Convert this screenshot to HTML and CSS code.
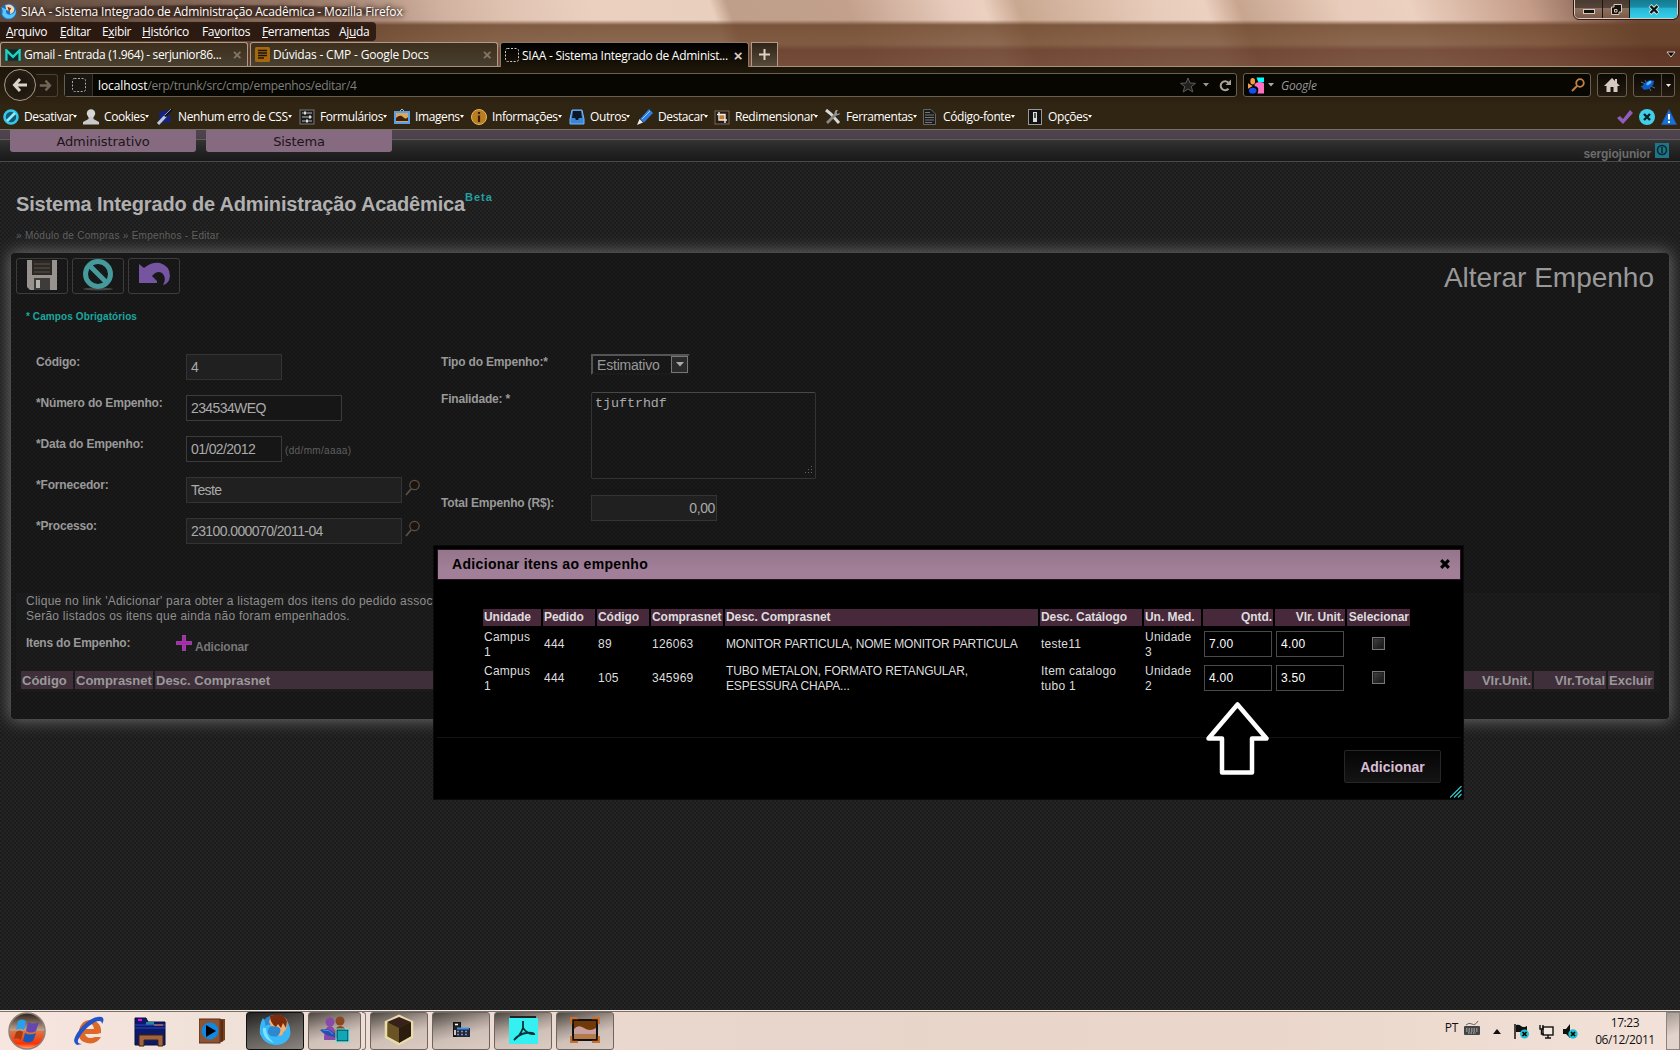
FILE: index.html
```html
<!DOCTYPE html>
<html lang="pt-BR">
<head>
<meta charset="utf-8">
<title>SIAA - Sistema Integrado de Administração Acadêmica</title>
<link rel="stylesheet" href="styles.css">
</head>
<body>
<header class="chrome">
  <div class="glass">
    <div class="titlebar">
      <svg class="tb-icon" width="17" height="17" viewBox="0 0 32 32"><circle cx="16" cy="16" r="15" fill="#1d6fc0"/><path d="M2 8Q7 14 4 21Q9 31 20 29Q31 25 30 12Q26 22 17 22Q9 20 12 12Z" fill="#54c8ff"/><path d="M10 4Q22 0 27 10Q28 18 19 21Q21 14 12 13Z" fill="#f4d8b4"/><path d="M14 7L21 10L17 17Z" fill="#8a3012"/></svg>
      <span class="win-title">SIAA - Sistema Integrado de Administração Acadêmica - Mozilla Firefox</span>
      <div class="win-controls">
        <span class="wc wc-min"><svg width="12" height="5"><rect x=".5" y=".5" width="11" height="4" fill="#111" stroke="#d8cbb8"/></svg></span>
        <span class="wc wc-max"><svg width="13" height="13" viewBox="0 0 13 13" fill="none"><path d="M4 1.5H11.5V9H9V11.5H1.500V4H4Z" fill="#15110c" stroke="#d8cbb8"/><path d="M4.500 6.500H7V9H4.500Z" stroke="#d8cbb8"/></svg></span>
        <span class="wc wc-close"><svg width="12" height="11" viewBox="0 0 12 11"><path d="M2 1.500L10 9.500M10 1.500L2 9.500" stroke="#cfe8e0" stroke-width="4"/><path d="M2.500 2L9.500 9M9.500 2L2.500 9" stroke="#111" stroke-width="2.400"/></svg></span>
      </div>
    </div>
    <nav class="menubar"><span><u>A</u>rquivo</span><span><u>E</u>ditar</span><span>E<u>x</u>ibir</span><span><u>H</u>istórico</span><span>Fa<u>v</u>oritos</span><span><u>F</u>erramentas</span><span>Aj<u>u</u>da</span></nav>
    <div class="tabs">
      <div class="tab"><svg width="16" height="12" viewBox="0 0 17 12"><path d="M0 0H17V12H0Z" fill="#0a2e2c"/><path d="M1.500 12V1L8.500 8L15.500 1V12" fill="none" stroke="#22d3c5" stroke-width="2.500"/></svg><span class="t1">Gmail - Entrada (1.964) - serjunior86...</span><b>×</b></div>
      <div class="tab"><svg width="15" height="15" viewBox="0 0 15 15"><rect width="15" height="15" rx="1.500" fill="#a5680e"/><path d="M3 3.500H12M3 6H12M3 8.500H12M3 11H9" stroke="#1e1402" stroke-width="1.300"/></svg><span class="t2">Dúvidas - CMP - Google Docs</span><b>×</b></div>
      <div class="tab active"><svg width="14" height="14"><rect x=".5" y=".5" width="13" height="13" rx="2" fill="none" stroke="#ccc" stroke-dasharray="2 1.500"/></svg><span class="t3">SIAA - Sistema Integrado de Administ...</span><b>×</b></div>
      <div class="newtab"><svg width="11" height="11"><path d="M5.500 0V11M0 5.500H11" stroke="#ded4c6" stroke-width="2"/></svg></div>
      <svg class="alltabs" width="10" height="7"><path d="M1 1H9L5 6Z" fill="#000" stroke="#d8c8b8"/></svg>
    </div>
  </div>
  <div class="navbar">
    <div class="backfwd">
      <span class="back"><svg width="16" height="16" viewBox="0 0 16 16"><path d="M15 8H3M8 2L2.500 8L8 14" fill="none" stroke="#dcd3c8" stroke-width="3"/></svg></span>
      <span class="fwd"><svg width="13" height="13" viewBox="0 0 16 16"><path d="M1 8H13M8 2L13.500 8L8 14" fill="none" stroke="#716656" stroke-width="3"/></svg></span>
    </div>
    <div class="urlbar">
      <span class="site"><svg width="14" height="14"><rect x=".5" y=".5" width="13" height="13" rx="2" fill="none" stroke="#aaa" stroke-dasharray="2 1.500"/></svg></span>
      <span class="url"><i>localhost</i>/erp/trunk/src/cmp/empenhos/editar/4</span>
      <svg class="star" width="16" height="16" viewBox="0 0 16 16"><path d="M8 1L10 6L15.500 6.300L11.300 9.600L12.800 15L8 12L3.200 15L4.700 9.600L.5 6.300L6 6Z" fill="#20201f" stroke="#5c5c5a"/></svg>
      <svg class="dn" width="6" height="4"><path d="M0 0H6L3 3.500Z" fill="#999"/></svg>
      <svg class="reload" width="13" height="13" viewBox="0 0 13 13"><path d="M9.500 9.800A4.500 4.500 0 1 1 9.300 3.500" fill="none" stroke="#aaa39a" stroke-width="2"/><path d="M12 .5V6H6.500Z" fill="#aaa39a"/></svg>
    </div>
    <div class="search">
      <svg width="16" height="17" viewBox="0 0 17 17"><rect width="17" height="17" fill="#080808"/><path d="M9 0H17V5H11Z" fill="#0ff"/><path d="M7 7Q11 3 17 6V17H10Q13 10 7 9Z" fill="#ff70c0"/><ellipse cx="5" cy="4" rx="2.500" ry="3.500" fill="#f4a040"/><path d="M0 6L5 9L0 12Z" fill="#f4a040"/><ellipse cx="5" cy="14" rx="4" ry="3" fill="#1450f0"/></svg>
      <svg class="dn" width="6" height="4"><path d="M0 0H6L3 3.500Z" fill="#aaa"/></svg>
      <em>Google</em>
      <svg class="mag" width="14" height="14" viewBox="0 0 14 14"><circle cx="9" cy="5" r="3.800" fill="none" stroke="#c08048" stroke-width="1.800"/><path d="M6 8L1 13" stroke="#c08048" stroke-width="2"/></svg>
    </div>
    <div class="tbtn home"><svg width="16" height="14" viewBox="0 0 16 14"><path d="M8 0L11 3V1H13V5L16 8H13.500V14H9.500V9H6.500V14H2.500V8H0Z" fill="#d6cbc2"/></svg></div>
    <div class="tbtn bug"><span><svg width="16" height="14" viewBox="0 0 16 14"><path d="M1 4L15 10M5 2L11 13M1 9L14 3" stroke="#4a6c90"/><ellipse cx="8" cy="7" rx="6.500" ry="3.600" transform="rotate(-35 8 7)" fill="#0c5cc8"/><ellipse cx="9" cy="5" rx="3" ry="1.500" transform="rotate(-35 9 5)" fill="#5cb8ff"/></svg></span><span><svg width="5" height="3"><path d="M0 0H5L2.500 3Z" fill="#eee"/></svg></span></div>
  </div>
  <div class="devbar">
    <span><svg viewBox="0 0 16 16"><circle cx="8" cy="8" r="6.500" fill="#0f5a78" stroke="#36c8e8" stroke-width="2.600"/><path d="M4 12L12 4" stroke="#8cecff" stroke-width="2.600"/></svg>Desativar<s></s></span>
    <span><svg viewBox="0 0 16 16"><circle cx="8" cy="4.500" r="4.200" fill="#d5d5d5"/><path d="M5.500 8H10.500V10L16 13V15.500H0V13L5.500 10Z" fill="#c9c9c9"/></svg>Cookies<s></s></span>
    <span><svg viewBox="0 0 16 16"><path d="M2 3L12 1L14 13L3 14Z" fill="#10239a" opacity=".8"/><path d="M1 15L9 6.500" stroke="#b8c8e8" stroke-width="3"/><path d="M8 7.500L15 0" stroke="#121216" stroke-width="2.500"/><path d="M8 6L14 0" stroke="#bbb" stroke-width=".8"/></svg>Nenhum erro de CSS<s></s></span>
    <span><svg viewBox="0 0 16 16"><rect x="1" y="1" width="14" height="14" fill="#1c1c1c" stroke="#777"/><path d="M3 4H13M3 8H13M3 12H13" stroke="#bbb"/><path d="M6 2.500V5.500M11 6.500V9.500M8 10.500V13.500" stroke="#ddd" stroke-width="2"/></svg>Formulários<s></s></span>
    <span><svg viewBox="0 0 16 16"><path d="M6 2L8 0L10 2" fill="none" stroke="#bbb"/><rect x="1" y="3" width="14" height="11" fill="#d9a660" stroke="#55a0e8" stroke-width="2"/><path d="M2 9Q6 5 9 8T14 8V12H2Z" fill="#40220c"/></svg>Imagens<s></s></span>
    <span><svg viewBox="0 0 16 16"><circle cx="8" cy="8" r="7.500" fill="#b87d20" stroke="#e8b860"/><path d="M8 3V5M8 6.500V13" stroke="#382005" stroke-width="2.200"/></svg>Informações<s></s></span>
    <span><svg viewBox="0 0 16 16"><path d="M3 1H13L15 10V15H1V10Z" fill="#3b86d8" stroke="#75b8f8"/><path d="M4 2H12L13 9H10L9 11H7L6 9H3Z" fill="#0c1622"/></svg>Outros<s></s></span>
    <span><svg viewBox="0 0 16 16"><path d="M0 16L2.500 10L6 13.500Z" fill="#eee"/><path d="M3 10L12 0L16 4L7 13.500Z" fill="#2d7ee0"/><path d="M5 10L13 2" stroke="#98ccff"/></svg>Destacar<s></s></span>
    <span><svg viewBox="0 0 16 16"><rect x="1" y="2" width="14" height="13" fill="#2a1b10" stroke="#776858"/><rect x="6" y="6" width="5" height="5" fill="#c87a2c"/><path d="M5 3V11H13M3 5.500H11V14" fill="none" stroke="#eee" stroke-width="1.400"/></svg>Redimensionar<s></s></span>
    <span><svg viewBox="0 0 16 16"><path d="M1 1L6 5L14 14" stroke="#d8d8d8" stroke-width="3" fill="none"/><path d="M2 14L11 5" stroke="#888" stroke-width="2.800"/><path d="M11 1Q8 4 11 6Q14 7 15.500 4L12.500 5L11.500 3.500L13 1Z" fill="#999"/></svg>Ferramentas<s></s></span>
    <span><svg viewBox="0 0 16 16"><path d="M1.500.5H9L13.500 5V15.500H1.500Z" fill="#1b1b1b" stroke="#666"/><path d="M3 6H12M3 8.500H12M3 11H12M3 13.500H10M3 3.500H8" stroke="#777"/></svg>Código-fonte<s></s></span>
    <span><svg viewBox="0 0 16 16"><rect x="1.500" y=".5" width="13" height="15" fill="#111" stroke="#999"/><path d="M6 13V3H10V13Z" fill="#ddd"/><path d="M8 4V9" stroke="#222" stroke-width="1.500"/></svg>Opções<s></s></span>
    <div class="devstatus">
      <svg viewBox="0 0 16 16"><path d="M0 9L3 7L6 10L13 1L16 4L6 15Z" fill="#8f5cc0"/></svg>
      <svg viewBox="0 0 16 16"><circle cx="8" cy="8" r="8" fill="#42d0e8"/><path d="M5 5L11 11M11 5L5 11" stroke="#082028" stroke-width="2.400"/></svg>
      <svg viewBox="0 0 16 16"><path d="M8 .5L15.500 15.500H.5Z" fill="#1472d8" stroke="#2a50a0"/><path d="M8 5V10.500M8 12V14" stroke="#fff" stroke-width="2"/></svg>
    </div>
  </div>
</header>

<main class="page">
  <div class="topmenu"><a>Administrativo</a><a>Sistema</a>
    <div class="user">sergiojunior<svg width="14" height="15" viewBox="0 0 14 15"><rect width="14" height="15" fill="#1f7488"/><circle cx="7" cy="7" r="4.500" fill="none" stroke="#07242c" stroke-width="1.500"/><path d="M7 4V10" stroke="#07242c" stroke-width="1.500"/></svg></div>
  </div>
  <h1>Sistema Integrado de Administração Acadêmica<sup>Beta</sup></h1>
  <p class="crumbs">» Módulo de Compras » Empenhos - Editar</p>
  <section class="panel">
    <div class="panelhead">
      <div class="actions">
        <a><svg width="30" height="30" viewBox="0 0 30 30"><path d="M0 0H30V30H3L0 27Z" fill="#97928d"/><rect x="5" y="0" width="20" height="15" fill="#2c2823"/><path d="M7 4H23M7 8H23M7 12H23" stroke="#5a544c"/><rect x="7" y="18" width="16" height="12" fill="#3d3c3a"/><rect x="9" y="20" width="4" height="8" fill="#b5b2ae"/></svg></a>
        <a><svg width="32" height="32" viewBox="0 0 32 32"><ellipse cx="16" cy="30" rx="15" ry="1.500" fill="#444"/><circle cx="16" cy="15" r="12.500" fill="none" stroke="#459a9c" stroke-width="5"/><path d="M7 6L25 24" stroke="#459a9c" stroke-width="5"/></svg></a>
        <a><svg width="32" height="32" viewBox="0 0 32 32"><path d="M1 5L6 9Q13 3 22 4Q32 7 32 17Q31 25 25 26Q29 19 24 14Q19 11 14 17L19 22V24H1Z" fill="#7555a0"/></svg></a>
      </div>
      <h2>Alterar Empenho</h2>
    </div>
    <p class="required">* Campos Obrigatórios</p>
    <div class="form">
      <div class="col left">
        <div class="row"><label>Código:</label><span class="in ro w96">4</span></div>
        <div class="row"><label>*Número do Empenho:</label><span class="in w156">234534WEQ</span></div>
        <div class="row"><label>*Data do Empenho:</label><span class="in w96">01/02/2012</span><small>(dd/mm/aaaa)</small></div>
        <div class="row"><label>*Fornecedor:</label><span class="in ro w216">Teste</span><svg class="lupa" width="15" height="17" viewBox="0 0 15 17"><circle cx="9.500" cy="6" r="4.700" fill="#1d130b" stroke="#57514c" stroke-width="1.200"/><path d="M6 10L1 16" stroke="#57514c" stroke-width="1.800"/></svg></div>
        <div class="row"><label>*Processo:</label><span class="in ro w216">23100.000070/2011-04</span><svg class="lupa" width="15" height="17" viewBox="0 0 15 17"><circle cx="9.500" cy="6" r="4.700" fill="#1d130b" stroke="#57514c" stroke-width="1.200"/><path d="M6 10L1 16" stroke="#57514c" stroke-width="1.800"/></svg></div>
      </div>
      <div class="col right">
        <div class="row r-tipo"><label>Tipo do Empenho:*</label><span class="sel">Estimativo<i><svg width="8" height="5"><path d="M0 0H8L4 4.500Z" fill="#aaa"/></svg></i></span></div>
        <div class="row r-fin"><label>Finalidade: *</label><span class="area">tjuftrhdf<svg width="9" height="9"><path d="M8.500 0V9M5.500 3V9M2.500 6V9" stroke="#666" stroke-dasharray="1 2" /></svg></span></div>
        <div class="row"><label>Total Empenho (R$):</label><span class="in ro w126">0,00</span></div>
      </div>
    </div>
    <div class="items">
      <p>Clique no link 'Adicionar' para obter a listagem dos itens do pedido associado<br>Serão listados os itens que ainda não foram empenhados.</p>
      <div class="additem"><strong>Itens do Empenho:</strong><svg width="16" height="16" viewBox="0 0 16 16"><path d="M6 0H10V6H16V10H10V16H6V10H0V6H6Z" fill="#8c4a94"/><path d="M8 1V15M1 8H15" stroke="#b520b8" stroke-width="2"/></svg><a>Adicionar</a></div>
      <div class="ihead"><b>Código</b><b>Comprasnet</b><b>Desc. Comprasnet</b><b class="r">Vlr.Unit.</b><b class="r">Vlr.Total</b><b>Excluir</b></div>
    </div>
  </section>
</main>

<div class="dialog">
  <div class="dtitle"><span>Adicionar itens ao empenho</span><svg width="10" height="10" viewBox="0 0 10 10"><path d="M1.200 1.200L8.800 8.800M8.800 1.200L1.200 8.800" stroke="#000" stroke-width="3.200"/></svg></div>
  <div class="dbody">
    <table>
      <colgroup><col class="c58"><col class="c52"><col class="c52"><col class="c72"><col class="c313"><col class="c102"><col class="c57"><col class="c70"><col class="c70"><col class="c63"></colgroup>
      <tr><th>Unidade</th><th>Pedido</th><th>Código</th><th>Comprasnet</th><th>Desc. Comprasnet</th><th>Desc. Catálogo</th><th>Un. Med.</th><th class="r">Qntd.</th><th class="r">Vlr. Unit.</th><th class="r">Selecionar</th></tr>
      <tr><td>Campus<br>1</td><td>444</td><td>89</td><td>126063</td><td class="d">MONITOR PARTICULA, NOME MONITOR PARTICULA</td><td>teste11</td><td>Unidade<br>3</td><td><span class="q">7.00</span></td><td><span class="q">4.00</span></td><td><span class="cb"></span></td></tr>
      <tr><td>Campus<br>1</td><td>444</td><td>105</td><td>345969</td><td class="d">TUBO METALON, FORMATO RETANGULAR,<br>ESPESSURA CHAPA...</td><td>Item catalogo<br>tubo 1</td><td>Unidade<br>2</td><td><span class="q">4.00</span></td><td><span class="q">3.50</span></td><td><span class="cb"></span></td></tr>
    </table>
  </div>
  <div class="dfoot"><a>Adicionar</a></div>
  <svg class="grip" width="12" height="12"><path d="M0 11.500L11.500 0M4 11.500L11.500 4M8 11.500L11.500 8" stroke="#2fd8d8" stroke-width="1.100"/></svg>
  <svg class="arrow" width="66" height="76" viewBox="1204 700 66 76"><path d="M1237.500 704.500L1266.500 738.500H1252V772.500H1222V738.500H1208.500Z" fill="#000" stroke="#fff" stroke-width="4.500" stroke-linejoin="round"/></svg>
</div>

<footer class="taskbar">
  <svg class="orb" width="38" height="38" viewBox="0 0 38 38"><defs><linearGradient id="o" x2="0" y2="1"><stop offset="0" stop-color="#2b2018"/><stop offset=".48" stop-color="#c0a48e"/><stop offset=".5" stop-color="#d87848"/><stop offset=".85" stop-color="#ff3000"/><stop offset="1" stop-color="#ffb080"/></linearGradient></defs><circle cx="19" cy="19" r="18" fill="url(#o)" stroke="#8f8078" stroke-width="1.500"/><path d="M10 9Q14 6 18 9L16 18Q12 15 8 18Z" fill="#28a0f0"/><path d="M20 10Q25 13 31 10L28 19Q23 22 18 19Z" fill="#6448b0"/><path d="M8 20Q12 17 15 20L13 28Q9 25 6 27Z" fill="#a83c10"/><path d="M17 21Q22 24 28 21L25 29Q20 32 15 29Z" fill="#1858b8"/></svg>
  <svg class="ie" width="32" height="32" viewBox="0 0 32 32"><path d="M24 19H12Q14 25 22 22L28 22Q23 30 14 28Q4 26 6 15Q9 4 18 5Q29 7 28 18ZM12 14H21Q20 8 16 9Q13 10 12 14Z" fill="#dd6828"/><path d="M4 30Q-3 27 7 14Q19 0 29 2Q32 4 29 9Q29 4 22 7Q10 14 5 25Q4 29 9 29Z" fill="#2452c8"/></svg>
  <svg class="ex" width="33" height="32" viewBox="0 0 33 32"><path d="M1 1H12L14 5H31V28H1Z" fill="#0c1868" stroke="#071038"/><path d="M4 2H8V4H4Z" fill="#f0f"/><path d="M12 5H20V8H12Z" fill="#2088a0"/><path d="M20 7H29V9H20Z" fill="#f07020"/><path d="M1 8H31M1 11H31" stroke="#2848c0"/><path d="M5 29V18H29V29H24V23H10V29Z" fill="#a06440" stroke="#402010"/></svg>
  <svg class="mp" width="27" height="26" viewBox="0 0 27 26"><path d="M5 1H26V22L20 25H5Z" fill="#7a4020"/><rect x="0" y="1" width="21" height="24" fill="#8c5432" stroke="#5a2c14"/><path d="M23 2V24" stroke="#3a1808"/><circle cx="11" cy="13" r="8.500" fill="#1288e0"/><path d="M7 7L17 13L7 19Z" fill="#000"/></svg>
  <div class="task on ff"><svg width="32" height="32" viewBox="0 0 32 32"><circle cx="16" cy="16" r="15" fill="#2c88d0"/><path d="M4 4Q7 8 6 12Q10 9 13 12Q8 14 9 19Q12 24 19 22Q27 20 29 9Q36 24 23 30Q7 34 1 20Q0 11 4 4Z" fill="#38b8f8"/><path d="M12 2Q22 -1 28 6Q30 14 24 19Q24 22 19 22Q24 15 19 13L12 12L10 8Z" fill="#eeb078"/><path d="M11 2Q24 -2 28 7L27 14L24 9L22 14L19 10L17 13Q11 9 11 2Z" fill="#7c2c0c"/><path d="M4 14Q3 25 15 29Q7 22 7 14Z" fill="#7ce0ff"/></svg></div>
  <div class="task msn"><svg width="32" height="28" viewBox="0 0 32 28"><circle cx="11" cy="6" r="4.500" fill="#8a48a8"/><path d="M5 24Q5 10 11 10Q17 10 17 24Z" fill="#8a48a8"/><circle cx="21" cy="5" r="4.500" fill="#884820"/><path d="M15 22Q15 10 21 10Q28 10 27 22Z" fill="#884820"/><path d="M1 14Q9 11 15 17T31 12Q27 21 16 21Q6 20 1 14Z" fill="#2450b0"/><path d="M4 14Q10 13 14 18" fill="none" stroke="#5c90e8"/><rect x="18" y="14" width="11" height="11" fill="#10a8b8" stroke="#053038"/><rect x="17" y="13" width="13" height="13" fill="none" stroke="#60e8e8"/></svg></div>
  <div class="stack"></div>
  <div class="task"><svg width="32" height="32" viewBox="0 0 32 32"><path d="M16 2L29 8V23L16 30L3 23V8Z" fill="#6b5424" stroke="#e8dca8" stroke-width="2.500"/><path d="M16 3L28 8L16 14L4 8Z" fill="#38201c"/><path d="M16 14L28 8V22L16 29Z" fill="#2a1c0e"/></svg></div>
  <div class="task"><svg width="17" height="16" viewBox="0 0 17 16"><rect x=".5" y=".5" width="7" height="14" fill="#222" stroke="#111"/><path d="M2 2.500H5M2 8V13" stroke="#fff" stroke-width="1.500"/><rect x="4" y="6" width="13" height="9" fill="#20283c"/><path d="M4 6.500H16" stroke="#4090e8" stroke-width="2"/><path d="M4 9.500H16M4 12.500H16" stroke="#8890a8" stroke-dasharray="2 2" stroke-width="1.500"/></svg></div>
  <div class="task"><svg width="29" height="29" viewBox="0 0 29 29"><rect width="26" height="4" x="1" fill="#222"/><rect y="2" width="29" height="26" fill="#35f0f0"/><path d="M14 5V12Q11 20 5 24Q10 18 17 17T25 18Q19 19 14 12" fill="none" stroke="#053038" stroke-width="1.800"/></svg></div>
  <div class="task"><svg width="30" height="26" viewBox="0 0 30 26"><rect x="3" y="3" width="24" height="20" fill="#c9a0a0" stroke="#111" stroke-width="2"/><path d="M4 4H26V11Q20 15 14 11T4 12Z" fill="#723808"/><path d="M4 17H26V22H4Z" fill="#b47a48"/><path d="M1 7V1H8M22 1H29V7M29 19V25H22M8 25H1V19" fill="none" stroke="#c87030" stroke-width="2.500"/></svg></div>
  <div class="tray">
    <span class="lang">PT</span>
    <svg class="kb" width="16" height="14" viewBox="0 0 16 14"><path d="M2 4Q5 1 8 3T14 0" fill="none" stroke="#666"/><rect y="5" width="16" height="9" rx="1" fill="#444"/><path d="M2 8H14M2 10H14M4 12H12" stroke="#ccc" stroke-dasharray="1.500 1"/></svg>
    <svg class="up" width="8" height="5"><path d="M0 5L4 0L8 5Z" fill="#111"/></svg>
    <svg class="fl" width="15" height="15" viewBox="0 0 15 15"><path d="M1 0V15" stroke="#111" stroke-width="1.500"/><path d="M2 1Q5 0 7 2T13 2V8H2Z" fill="#111"/><circle cx="10.500" cy="10" r="4.500" fill="#20c0d0"/><path d="M8.500 8L12.500 12M12.500 8L8.500 12" stroke="#000" stroke-width="1.600"/></svg>
    <svg class="nt" width="15" height="15" viewBox="0 0 15 15"><rect x="4" y="3" width="10" height="8" fill="#f4e8e0" stroke="#111" stroke-width="1.400"/><path d="M6 14H12M9 11V14M1 1V5H4V1M2.500 5V10H5" fill="none" stroke="#111" stroke-width="1.400"/></svg>
    <svg class="sd" width="15" height="15" viewBox="0 0 15 15"><path d="M0 5H3L7 0V14L3 10H0Z" fill="#111"/><circle cx="10" cy="10" r="4.700" fill="#20c0d0"/><path d="M8 8L12 12M12 8L8 12" stroke="#000" stroke-width="1.600"/></svg>
    <div class="clock"><span>17:23</span><span>06/12/2011</span></div>
    <div class="showdesk"></div>
  </div>
</footer>
</body>
</html>
```
FILE: styles.css
```css
*{box-sizing:border-box}
body{margin:0;width:1680px;height:1050px;overflow:hidden;position:relative;display:flex;flex-direction:column;background:#222;font:12px/15px "Liberation Sans",Arial,sans-serif;color:#999}
svg{flex:none;display:block}
h1,h2,p{margin:0}
.chrome,.taskbar{font-family:"Open Sans","Noto Sans",sans-serif;font-size:12px;flex:none}
.chrome{color:#fff;height:130px;display:flex;flex-direction:column;letter-spacing:-.45px}

/* glass window frame */
.glass{height:67px;border-bottom:1px solid #a8927e;background:
 linear-gradient(90deg,rgba(30,18,10,.35),rgba(30,18,10,0) 30%),
 linear-gradient(180deg,transparent 20px,rgba(104,65,38,.8) 25px,rgba(104,65,38,.72) 44px,rgba(92,48,30,.8) 50px,rgba(98,56,38,.8)),
 linear-gradient(70deg,#806758 0,#b08d7a 20%,#d8b8a6 27%,#ebd0c0 36%,#e9cfbd 43%,#bf9f8a 44%,#c2a08c 51%,#e7cabb 57%,#ecd0c0 59%,#c9a890 61%,#e8ccbb 69%,#ecd0c0 72%,#c7a58f 74%,#e9ccbb 80%,#ecd0c0 84%,#c49c88 91%,#6d4a3c 97%)}
.titlebar{height:22px;display:flex;align-items:center}
.tb-icon{margin-left:0}
.win-title{margin-left:4px;padding-right:8px;letter-spacing:-.16px;background:radial-gradient(closest-side,rgba(40,22,14,.6) 70%,transparent);text-shadow:0 0 4px #2a1810,0 0 6px #3a241a;white-space:nowrap}
.win-controls{margin-left:auto;margin-right:2px;align-self:flex-start;display:flex;height:19px;border:1px solid #e0cabc;border-top:0;border-radius:0 0 5px 5px;outline:1px solid #2a1b14;overflow:hidden}
.wc{display:flex;align-items:center;justify-content:center;border-right:1px solid #20150e;background:linear-gradient(#4a3a30 0,#54443a 45%,#8d7261 46%,#7a5a48)}
.wc-min,.wc-max{width:28px}
.wc-max{width:27px}
.wc-min{padding-top:4px}
.wc-close{width:47px;border:0;background:linear-gradient(#147a90,#1a8ca6 40%,#28b4d4 45%,#36d0e8)}
.menubar{display:grid;grid-template-columns:54px 42px 40px 60px 60px 77px 37px;padding-left:6px;width:376px;height:19px;line-height:20px;background:rgba(28,16,10,.78);border-radius:0 4px 4px 0;letter-spacing:-.35px}
.tabs{display:flex;height:26px;margin-top:1px;gap:2px;align-items:stretch}
.tab{width:248px;display:flex;align-items:center;padding:0 6px 0 4px;border:1px solid #b09a88;border-bottom:0;border-radius:3px 3px 0 0;background:linear-gradient(#3d2e1d,#49402f);height:24px}
.tab.active{background:linear-gradient(#000,#1b1408);height:25px;width:249px;border-color:#8a7866}
.tab span{margin-left:3px;white-space:nowrap}
.t1{letter-spacing:-.34px}
.t2{letter-spacing:-.18px}
.t3{letter-spacing:-.26px}
.tab b{margin-left:auto;font:bold 15px/15px "Liberation Sans",sans-serif;color:#857869}
.tab.active b{color:#d8d0c8}
.newtab{width:27px;height:24px;display:flex;align-items:center;justify-content:center;border:1px solid #b09a88;border-bottom:0;background:linear-gradient(#2f2417,#564a3a)}
.alltabs{margin:9px 4px 0 auto}

.navbar{height:39px;display:flex;align-items:flex-start;padding-top:6px;background:linear-gradient(#1b1409,#302413)}
.backfwd{display:flex;align-items:center;margin:-5px 0 0 4px;height:34px}
.back{width:32px;height:32px;border-radius:50%;border:1px solid #a59a8b;background:radial-gradient(#181410,#2c2012);display:flex;align-items:center;justify-content:center}
.fwd{width:22px;height:23px;padding-right:3px;border:1px solid #4c412f;border-left:0;border-radius:0 3px 3px 0;display:flex;align-items:center;justify-content:center;background:#241b10}
.urlbar,.search,.tbtn{height:24px;border:1px solid #68604f;border-radius:3px;background:#070601;display:flex;align-items:center}
.urlbar{margin-left:6px;width:1173px}
.site{width:28px;height:22px;background:#191510;border-right:1px solid #38342c;display:flex;align-items:center;justify-content:center}
.url{margin-left:5px;color:#7e7e7c;letter-spacing:-.3px}
.url i{font-style:normal;color:#fff;letter-spacing:-.1px}
.star{margin-left:auto}
.urlbar .dn{margin:0 10px 0 7px}
.reload{margin-right:4px}
.search{margin-left:6px;width:348px;padding:0 5px 0 4px}
.search .dn{margin:0 7px 0 4px}
.search em{color:#979797;letter-spacing:-.2px}
.mag{margin-left:auto}
.tbtn{background:linear-gradient(#0c0904,#231a10);justify-content:center;margin-left:6px;width:30px}
.bug{width:42px}
.bug span{width:12px;height:22px;display:flex;align-items:center;justify-content:center}
.bug span:first-child{width:29px;border-right:1px solid #57503f}

.devbar{height:24px;padding-bottom:2px;background:#302413;border-bottom:1px solid #756f68;display:grid;grid-template-columns:80px 74px 142px 95px 77px 98px 68px 77px 111px 97px 105px 68px 1fr;padding-left:3px;align-items:center;letter-spacing:-.4px}
.devbar>span{display:flex;align-items:center;white-space:nowrap}
.devbar svg{width:16px;height:16px}
.devbar>span svg{margin-right:5px}
.devbar s{border:2.500px solid transparent;border-top:3px solid #fff;border-bottom:0;margin-left:0}
.devstatus{display:flex;gap:6px;justify-content:flex-end;padding-right:3px}

/* page */
.page{flex:1;min-height:0;background:
 repeating-conic-gradient(rgba(0,0,0,.22) 0 25%,transparent 0 50%) 0 0/4px 4px,#242424}
.topmenu{height:32px;display:flex;gap:10px;padding-left:10px;border-bottom:1px solid #484848;background:linear-gradient(#50444f 0,#4b3f4a 9px,#5e5c5e 9px,#5e5c5e 10px,#343434 10px,#292929 17px,#191919 31px)}
.topmenu a{width:186px;height:22px;border-radius:0 0 3px 3px;background:#866a80;color:#1c1519;font:13px/23px "DejaVu Sans",sans-serif;text-align:center;letter-spacing:-.1px}
.user{margin-left:auto;margin-right:11px;display:flex;gap:4px;font-size:12px;font-weight:bold;line-height:16px;padding-top:16px;color:#6c6c6c;letter-spacing:-.15px}
.user svg{margin-top:-3px}
h1{font-size:20px;line-height:24px;margin:29px 0 0 16px;color:#b0b0b0;height:24px;white-space:nowrap;letter-spacing:-.17px}
h1 sup{font-size:11px;line-height:12px;color:#25a0a5;letter-spacing:1px;vertical-align:10px}
.crumbs{margin:14px 0 0 16px;font-size:10px;line-height:14px;height:28px;color:#606060;letter-spacing:.28px}
.panel{margin:-4px 11px 0;height:466px;border-radius:4px;box-shadow:0 0 16px 2px #686868;padding-top:5px;background:
 repeating-conic-gradient(rgba(0,0,0,.2) 0 25%,transparent 0 50%) 0 0/4px 4px,#1a1a1a}
.panelhead{display:flex;justify-content:space-between;padding:0 15px 0 5px;height:36px}
.actions{display:flex;gap:4px}
.actions a{width:52px;height:36px;border:1px solid #3d3d3d;border-radius:3px;display:flex;align-items:center;justify-content:center;padding-bottom:2px}
h2{font-size:28px;line-height:39px;font-weight:normal;color:#999}
.required{margin:16px 0 0 15px;font-size:10px;line-height:14px;font-weight:bold;color:#1ba79f;letter-spacing:.1px}
.form{display:flex;margin-top:30px;height:239px}
.left{width:405px;padding-left:25px}
.right{padding-left:25px}
.row{display:flex;height:41px}
.row label,.in{flex:none}
.row label{width:150px;font-weight:bold;line-height:16px;white-space:nowrap;letter-spacing:-.18px}
.in{height:26px;border:1px solid #3b3b3b;padding-left:4px;font-size:14px;line-height:25px;color:#aaa;letter-spacing:-.6px;background:#161616}
.ro{background:#202020;border-color:#333}
.w96{width:96px}.w156{width:156px}.w216{width:216px}
.w126{width:126px;text-align:right;padding-right:1px;letter-spacing:-.4px}
.row small{font-size:10px;margin:7px 0 0 3px;color:#5f5f5f;letter-spacing:.35px}
.lupa{margin:2px 0 0 3px}
.r-tipo{height:37px}
.r-fin{height:104px}
.sel{width:99px;height:21px;border:2px solid #555;border-right-color:#1b1b1b;border-bottom-color:#1b1b1b;display:flex;padding-left:4px;font-size:14px;line-height:19px;color:#999;justify-content:space-between;letter-spacing:-.2px}
.sel i{width:17px;height:17px;border:1px solid #777;display:flex;align-items:center;justify-content:center;background:#2a2a2a}
.area{width:225px;height:87px;margin-top:1px;border:1px solid #333;border-top-color:#484848;border-radius:2px;padding:3px;font:13.300px/16px "Liberation Mono",monospace;color:#aaa;display:flex;justify-content:space-between;white-space:nowrap}
.area svg{align-self:flex-end}
.items{margin:0 9px 0 5px;height:99px;background:rgba(255,255,255,.015);padding:1px 6px 0 5px}
.items p{padding-left:5px;line-height:15px;white-space:nowrap;color:#8e8e8e;letter-spacing:.25px}
.additem{display:flex;margin:11px 0 0 5px;height:36px}
.additem strong{width:150px;line-height:16px;letter-spacing:-.22px}
.additem a{margin:5px 0 0 3px;font-weight:bold;color:#777;line-height:15px;letter-spacing:-.2px}
.ihead{display:grid;grid-template-columns:52px 78px 1fr 200px 72px 46px;gap:2px}
.ihead b{background:#3f2f3a;height:18px;line-height:19px;font-size:13px;padding:0 1px;white-space:nowrap}
.ihead .r{text-align:right}

/* modal */
.dialog{position:absolute;left:433px;top:545px;width:1031px;height:255px;border:1px solid #0b0b0b;background:#000;padding:3px 2px 3px 3px}
.dtitle{height:31px;background:linear-gradient(#94758a,#a17f98 70%);border:1px solid #2b1020;display:flex;align-items:center;justify-content:space-between;padding:0 10px 1px 14px;color:#000;font-weight:bold;font-size:14px;line-height:20px;letter-spacing:.33px}
.dbody{height:158px;padding:27px 0 0 44px;border-bottom:1px solid #121212}
table{table-layout:fixed;border-collapse:separate;border-spacing:2px;width:931px;color:#ddd}
.c58{width:58px}.c52{width:52px}.c72{width:72px}.c313{width:313px}.c102{width:102px}.c57{width:57px}.c70{width:70px}.c63{width:63px}
th{background:#47293b;height:17px;padding:0 1px;line-height:17px;text-align:left;white-space:nowrap;color:#ddd;letter-spacing:-.05px}
td{height:32px;padding:1px 1px 0;line-height:15px;white-space:nowrap;letter-spacing:.25px}
td.d{letter-spacing:-.16px}
th.r{text-align:right}
.q{display:block;width:68px;height:26px;margin-top:-1px;border:1px solid #4a4a4a;padding-left:4px;line-height:25px;color:#fff}
.cb{display:block;width:13px;height:13px;margin:-2px auto 0;border:1px solid #777;background:linear-gradient(135deg,#444,#111);box-shadow:inset 0 0 0 1px #222}
.dfoot{display:flex;justify-content:flex-end;padding:12px 20px 0 0}
.dfoot a{width:97px;height:33px;border:1px solid #262626;border-radius:2px;background:linear-gradient(#050505,#141414);text-align:center;font-weight:bold;font-size:14px;line-height:33px;color:#d9bdd4}
.grip{position:absolute;right:1px;bottom:1px}
.arrow{position:absolute;left:770px;top:154px}

/* taskbar */
.taskbar{height:40px;border-top:1px solid #f4eae2;box-shadow:inset 0 1px #77706b;display:flex;padding-top:1px;color:#111;background:linear-gradient(90deg,#f6e6df,#efe0d8 15%,#e8d5cb 45%,#ead6ca 75%,#f2e2d9)}
.orb{margin-left:8px}
.ie{margin:3px 0 0 27px}.ex{margin:5px 0 0 29px}.mp{margin:6px 0 0 32px}
.task{width:58px;height:38px;margin-right:4px;border:1px solid #6e655e;border-radius:3px;display:flex;align-items:center;justify-content:center;padding-bottom:2px;background:linear-gradient(165deg,#4d4742 0,#a99c94 38%,#cfc0b8 60%,#dccbc2)}
.ff{margin-left:20px}
.on{border-color:#111;background:linear-gradient(165deg,#222 0,#5e5a56 50%,#8b8580)}
.msn{width:53px;margin-right:1px}
.stack{width:4px;margin-right:4px;border:1px solid #80756e;border-left:0;border-radius:0 3px 3px 0}
.tray{margin-left:auto;display:flex;align-items:flex-start}
.lang{margin:6px 6px 0 0;line-height:20px;letter-spacing:-.3px}
.kb{margin-top:9px}.up{margin:17px 0 0 13px}.fl{margin:12px 0 0 13px}.nt{margin:12px 0 0 10px}.sd{margin:12px 0 0 9px}
.clock{display:flex;flex-direction:column;width:82px;margin:2px 0 0 6px;text-align:center;line-height:17px;letter-spacing:-.4px}
.showdesk{width:14px;height:38px;border:1px solid #8d847e;background:linear-gradient(160deg,#a79b94,#e2d4cc 60%)}
```
